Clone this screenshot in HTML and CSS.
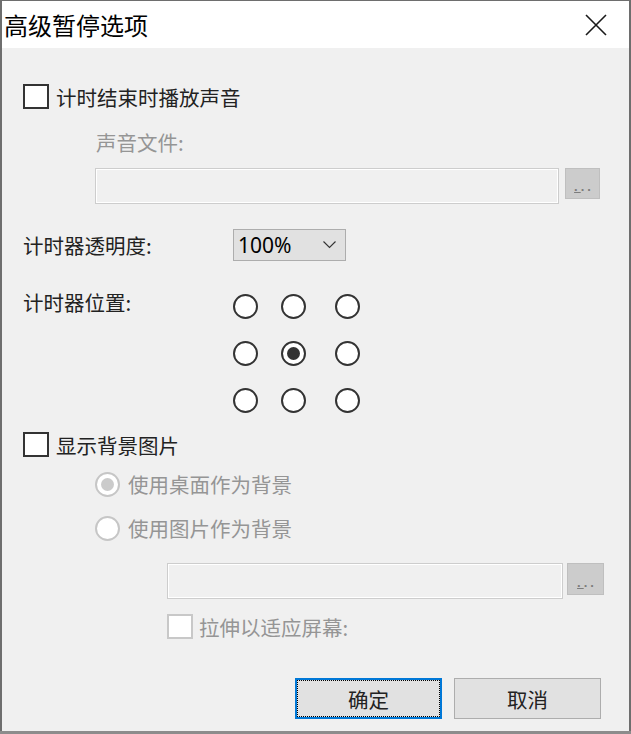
FILE: index.html
```html
<!DOCTYPE html>
<html>
<head>
    <title>高级暂停选项</title>
    <link rel="stylesheet" href="styles.css">
</head>
<body>
    <div class="window">
        <div class="titlebar">
            <span class="title">高级暂停选项</span>
            <svg class="close" width="22" height="22" viewBox="0 0 22 22">
                <path d="M1 1 L21 21 M21 1 L1 21" stroke="#1a1a1a" stroke-width="1.6" fill="none"/>
            </svg>
        </div>
        <div class="content">
            <div class="check-row play-sound">
                <span class="checkbox"></span>
                <span class="check-text">计时结束时播放声音</span>
            </div>
            <div class="sub-label disabled">声音文件:</div>
            <div class="file-row sound-file">
                <div class="textbox"></div>
                <div class="browse"><u>.</u>..</div>
            </div>

            <div class="field-row opacity-row">
                <span class="field-label">计时器透明度:</span>
                <div class="select">
                    <span>100%</span>
                    <svg width="13" height="8" viewBox="0 0 13 8">
                        <polyline points="0.5,0.5 6.5,6.5 12.5,0.5" stroke="#333" stroke-width="1.1" fill="none"/>
                    </svg>
                </div>
            </div>

            <div class="field-row position-row">
                <span class="field-label position-label">计时器位置:</span>
                <div class="radio-grid">
                    <span class="radio"></span>
                    <span class="radio"></span>
                    <span class="radio"></span>
                    <span class="radio"></span>
                    <span class="radio checked"></span>
                    <span class="radio"></span>
                    <span class="radio"></span>
                    <span class="radio"></span>
                    <span class="radio"></span>
                </div>
            </div>

            <div class="check-row show-bg">
                <span class="checkbox"></span>
                <span class="check-text">显示背景图片</span>
            </div>
            <div class="option-row desktop-bg">
                <span class="radio disabled checked"></span>
                <span class="disabled">使用桌面作为背景</span>
            </div>
            <div class="option-row image-bg">
                <span class="radio disabled"></span>
                <span class="disabled">使用图片作为背景</span>
            </div>
            <div class="file-row image-file">
                <div class="textbox"></div>
                <div class="browse"><u>.</u>..</div>
            </div>
            <div class="check-row stretch">
                <span class="checkbox disabled"></span>
                <span class="check-text disabled">拉伸以适应屏幕:</span>
            </div>

            <div class="buttons">
                <button class="btn default">确定</button>
                <button class="btn">取消</button>
            </div>
        </div>
    </div>
</body>
</html>
```

FILE: styles.css
```css
body {
    margin: 0;
    background: #8c8c8c;
    font-family: "Noto Sans CJK SC", sans-serif;
}
.window {
    width: 631px;
    height: 731px;
    box-sizing: border-box;
    border: 2px solid #6e6e6e;
    border-top-width: 1px;
    border-bottom: none;
    background: #f0f0f0;
}
.titlebar {
    height: 47px;
    background: #fff;
    display: flex;
    align-items: center;
    justify-content: space-between;
    padding: 0 22px 0 2px;
}
.title {
    font-size: 24px;
    line-height: 28px;
    color: #000;
}
.close {
    margin-top: 1px;
}
.content {
    padding: 36px 0 0 21px;
    font-size: 20.5px;
    line-height: 20px;
    color: #222;
}
.disabled {
    color: #959595;
}

/* checkboxes */
.check-row {
    display: flex;
    align-items: center;
    gap: 7px;
    height: 25px;
}
.checkbox {
    width: 26px;
    height: 25px;
    box-sizing: border-box;
    border: 2px solid #333;
    background: #fff;
}
.checkbox.disabled {
    border-color: #c8c8c8;
}
.show-bg {
    margin-top: 19px;
}
.stretch {
    margin: 15px 0 0 144px;
    gap: 6px;
}

/* sound file */
.sub-label {
    margin: 23px 0 0 73px;
}
.file-row {
    display: flex;
    align-items: flex-start;
}
.sound-file {
    margin: 16px 0 0 72px;
    gap: 6px;
}
.image-file {
    margin: 21px 0 0 144px;
    gap: 4px;
}
.textbox {
    height: 36px;
    box-sizing: border-box;
    border: 1px solid #cdcdcd;
    box-shadow: inset 0 0 0 1px #fff;
    background: #f0f0f0;
}
.sound-file .textbox {
    width: 464px;
}
.image-file .textbox {
    width: 396px;
}
.browse {
    width: 35px;
    height: 31px;
    box-sizing: border-box;
    border: 1px solid #bfbfbf;
    background: #cccccc;
    color: #7c7c7c;
    font-family: "Liberation Sans", sans-serif;
    font-weight: bold;
    font-size: 13px;
    line-height: 12px;
    letter-spacing: 3px;
    text-align: center;
    padding: 12px 0 0 3px;
}
.image-file .browse {
    width: 37px;
    height: 32px;
    padding-top: 13px;
}

/* opacity and position */
.field-row {
    display: flex;
}
.field-label {
    width: 210px;
}
.opacity-row {
    margin-top: 25px;
    align-items: center;
}
.select {
    width: 113px;
    height: 32px;
    box-sizing: border-box;
    border: 1px solid #adadad;
    background: #e1e1e1;
    display: flex;
    align-items: center;
    justify-content: space-between;
    padding: 0 9px 0 4px;
    font-family: "Noto Sans", sans-serif;
    font-size: 21px;
    color: #000;
}
.position-row {
    margin-top: 33px;
    align-items: flex-start;
}
.position-label {
    line-height: 16px;
}
.radio-grid {
    display: grid;
    grid-template-columns: 48px 54px 25px;
    grid-template-rows: 47px 47px 25px;
}

/* radios */
.radio {
    width: 25px;
    height: 25px;
    box-sizing: border-box;
    border: 2px solid #333;
    border-radius: 50%;
    background: #fff;
    display: flex;
    align-items: center;
    justify-content: center;
}
.radio.checked::after {
    content: "";
    width: 13px;
    height: 13px;
    border-radius: 50%;
    background: #333;
}
.radio.disabled {
    border-color: #c6c6c6;
}
.radio.disabled.checked::after {
    background: #cbcbcb;
}
.option-row {
    display: flex;
    align-items: center;
    gap: 8px;
    height: 25px;
    margin-left: 72px;
}
.option-row .disabled {
    margin-top: -3px;
}
.desktop-bg {
    margin-top: 16px;
}
.image-bg {
    margin-top: 19px;
}

/* buttons */
.buttons {
    display: flex;
    justify-content: flex-end;
    gap: 12px;
    margin: 39px 28px 0 0;
}
.btn {
    width: 147px;
    height: 41px;
    box-sizing: border-box;
    border: 1px solid #adadad;
    background: #e1e1e1;
    font-family: "Noto Sans CJK SC", sans-serif;
    font-size: 20.5px;
    color: #222;
    padding: 0;
}
.btn.default {
    border: 2px solid #0078d7;
    outline: 1px dotted #000;
    outline-offset: -3px;
}
```
